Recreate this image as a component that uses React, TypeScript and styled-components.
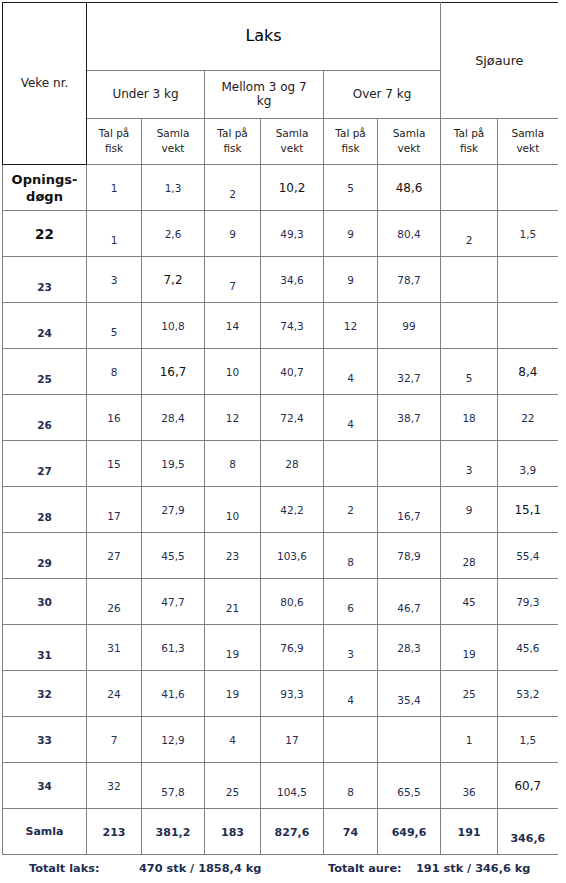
import React from 'react';
import styled, { createGlobalStyle } from 'styled-components';

const GlobalStyle = createGlobalStyle`
  html, body {
    margin: 0;
    padding: 0;
    background: #ffffff;
  }
  body {
    font-family: "DejaVu Sans", Verdana, sans-serif;
  }
`;

const Page = styled.div`
  padding: 2px 0 0 2px;
  width: 566px;
  box-sizing: border-box;
`;

const Table = styled.table`
  border-collapse: collapse;
  table-layout: fixed;
  width: 555px;
  border-top: 1px solid #1a1a1a;
  border-left: 1px solid #1a1a1a;
  border-bottom: 1px solid #1a1a1a;
  border-right: hidden;
`;

const HeadRow = styled.tr<{ $h: number }>`
  height: ${(p) => p.$h}px;
`;

const HeadCell = styled.th<{ $size?: number; $dark?: boolean }>`
  padding: 0 2px;
  border: 1px solid #808080;
  border-top-color: #1a1a1a;
  ${(p) => (p.$dark ? 'border-color: #1a1a1a;' : '')}
  font-weight: normal;
  font-size: ${(p) => p.$size ?? 10.5}px;
  line-height: 1.38;
  color: #222222;
  text-align: center;
  vertical-align: middle;
`;

const SubHead = styled.th<{ $size?: number }>`
  padding: 0 2px 1px;
  border: 1px solid #808080;
  font-weight: normal;
  font-size: ${(p) => p.$size ?? 10.5}px;
  line-height: ${(p) => (p.$size ? 14 : 15)}px;
  color: #222222;
  text-align: center;
  vertical-align: middle;
`;

const Row = styled.tr`
  height: 46px;
`;

const Cell = styled.td<{ $low?: boolean; $big?: boolean; $bold?: boolean }>`
  padding: ${(p) => (p.$low ? '14px 0 0' : '2px 0 0')};
  border: 1px solid #808080;
  font-size: ${(p) => (p.$big ? 12 : p.$bold ? 11 : 10.5)}px;
  font-weight: ${(p) => (p.$bold ? 'bold' : 'normal')};
  color: ${(p) => (p.$big ? '#111111' : '#1f2d4f')};
  text-align: center;
  vertical-align: middle;
  line-height: 1.2;
`;

const WeekCell = styled.td<{ $low?: boolean; $size?: number; $first?: boolean }>`
  padding: ${(p) => (p.$low ? '16px 0 0' : '2px 0 0')};
  border: 1px solid #808080;
  border-top-color: ${(p) => (p.$first ? '#1a1a1a' : '#808080')};
  font-size: ${(p) => p.$size ?? 10.5}px;
  font-weight: bold;
  color: ${(p) => (p.$size && p.$size > 12 ? '#111111' : '#1f2d4f')};
  text-align: center;
  vertical-align: middle;
  line-height: 1.3;
`;

const Footer = styled.div`
  display: grid;
  grid-template-columns: 110px 189px 88px 1fr;
  padding: 7px 0 0 27px;
  font-size: 11.3px;
  font-weight: bold;
  color: #1f2d4f;
`;

type WeekRow = {
  label: React.ReactNode;
  low?: boolean;
  size?: number;
  cells: string[];
};

const rows: WeekRow[] = [
  { label: <>Opnings-<br />døgn</>, size: 13, cells: ['1', '1,3', '2|l', '10,2|b', '5', '48,6|b', '', ''] },
  { label: '22', size: 13.5, cells: ['1|l', '2,6', '9', '49,3', '9', '80,4', '2|l', '1,5'] },
  { label: '23', low: true, cells: ['3', '7,2|b', '7|l', '34,6', '9', '78,7', '', ''] },
  { label: '24', low: true, cells: ['5|l', '10,8', '14', '74,3', '12', '99', '', ''] },
  { label: '25', low: true, cells: ['8', '16,7|b', '10', '40,7', '4|l', '32,7|l', '5|l', '8,4|b'] },
  { label: '26', low: true, cells: ['16', '28,4', '12', '72,4', '4|l', '38,7', '18', '22'] },
  { label: '27', low: true, cells: ['15', '19,5', '8', '28', '', '', '3|l', '3,9|l'] },
  { label: '28', low: true, cells: ['17|l', '27,9', '10|l', '42,2', '2', '16,7|l', '9', '15,1|b'] },
  { label: '29', low: true, cells: ['27', '45,5', '23', '103,6', '8|l', '78,9', '28|l', '55,4'] },
  { label: '30', cells: ['26|l', '47,7', '21|l', '80,6', '6|l', '46,7|l', '45', '79,3'] },
  { label: '31', low: true, cells: ['31', '61,3', '19|l', '76,9', '3|l', '28,3', '19|l', '45,6'] },
  { label: '32', cells: ['24', '41,6', '19', '93,3', '4|l', '35,4|l', '25', '53,2'] },
  { label: '33', cells: ['7', '12,9', '4', '17', '', '', '1', '1,5'] },
  { label: '34', cells: ['32', '57,8|l', '25|l', '104,5|l', '8|l', '65,5|l', '36|l', '60,7|b'] },
];

const totals = ['213', '381,2', '183', '827,6', '74', '649,6', '191', '346,6|l'];

const colWidths = [84, 55, 63, 56, 63, 54, 63, 57, 60];

const parse = (raw: string) => {
  const [value, flag] = raw.split('|');
  return { value, low: flag === 'l', big: flag === 'b' };
};

const App: React.FC = () => {
  return (
    <>
      <GlobalStyle />
      <Page>
        <Table>
          <colgroup>
            {colWidths.map((w, i) => (
              <col key={i} style={{ width: w }} />
            ))}
          </colgroup>
          <thead>
            <HeadRow $h={68}>
              <HeadCell rowSpan={3} $dark $size={12}>Veke nr.</HeadCell>
              <HeadCell colSpan={6} $size={16} style={{ color: '#000' }}>Laks</HeadCell>
              <HeadCell colSpan={2} rowSpan={2} $size={12.8}>Sjøaure</HeadCell>
            </HeadRow>
            <HeadRow $h={48}>
              <SubHead colSpan={2} $size={12}>Under 3 kg</SubHead>
              <SubHead colSpan={2} $size={12} style={{ color: '#2a1420' }}>Mellom 3 og 7<br />kg</SubHead>
              <SubHead colSpan={2} $size={12}>Over 7 kg</SubHead>
            </HeadRow>
            <HeadRow $h={46}>
              {Array.from({ length: 4 }).map((_, i) => (
                <React.Fragment key={i}>
                  <SubHead>Tal på<br />fisk</SubHead>
                  <SubHead>Samla<br />vekt</SubHead>
                </React.Fragment>
              ))}
            </HeadRow>
          </thead>
          <tbody>
            {rows.map((row, ri) => (
              <Row key={ri}>
                <WeekCell $low={row.low} $size={row.size} $first={ri === 0}>{row.label}</WeekCell>
                {row.cells.map((raw, ci) => {
                  const c = parse(raw);
                  return (
                    <Cell key={ci} $low={c.low} $big={c.big}>{c.value}</Cell>
                  );
                })}
              </Row>
            ))}
            <Row>
              <WeekCell $size={11}>Samla</WeekCell>
              {totals.map((raw, ci) => {
                const c = parse(raw);
                return (
                  <Cell key={ci} $low={c.low} $bold>{c.value}</Cell>
                );
              })}
            </Row>
          </tbody>
        </Table>
        <Footer>
          <span>Totalt laks:</span>
          <span>470 stk / 1858,4 kg</span>
          <span>Totalt aure:</span>
          <span>191 stk / 346,6 kg</span>
        </Footer>
      </Page>
    </>
  );
};

export default App;
